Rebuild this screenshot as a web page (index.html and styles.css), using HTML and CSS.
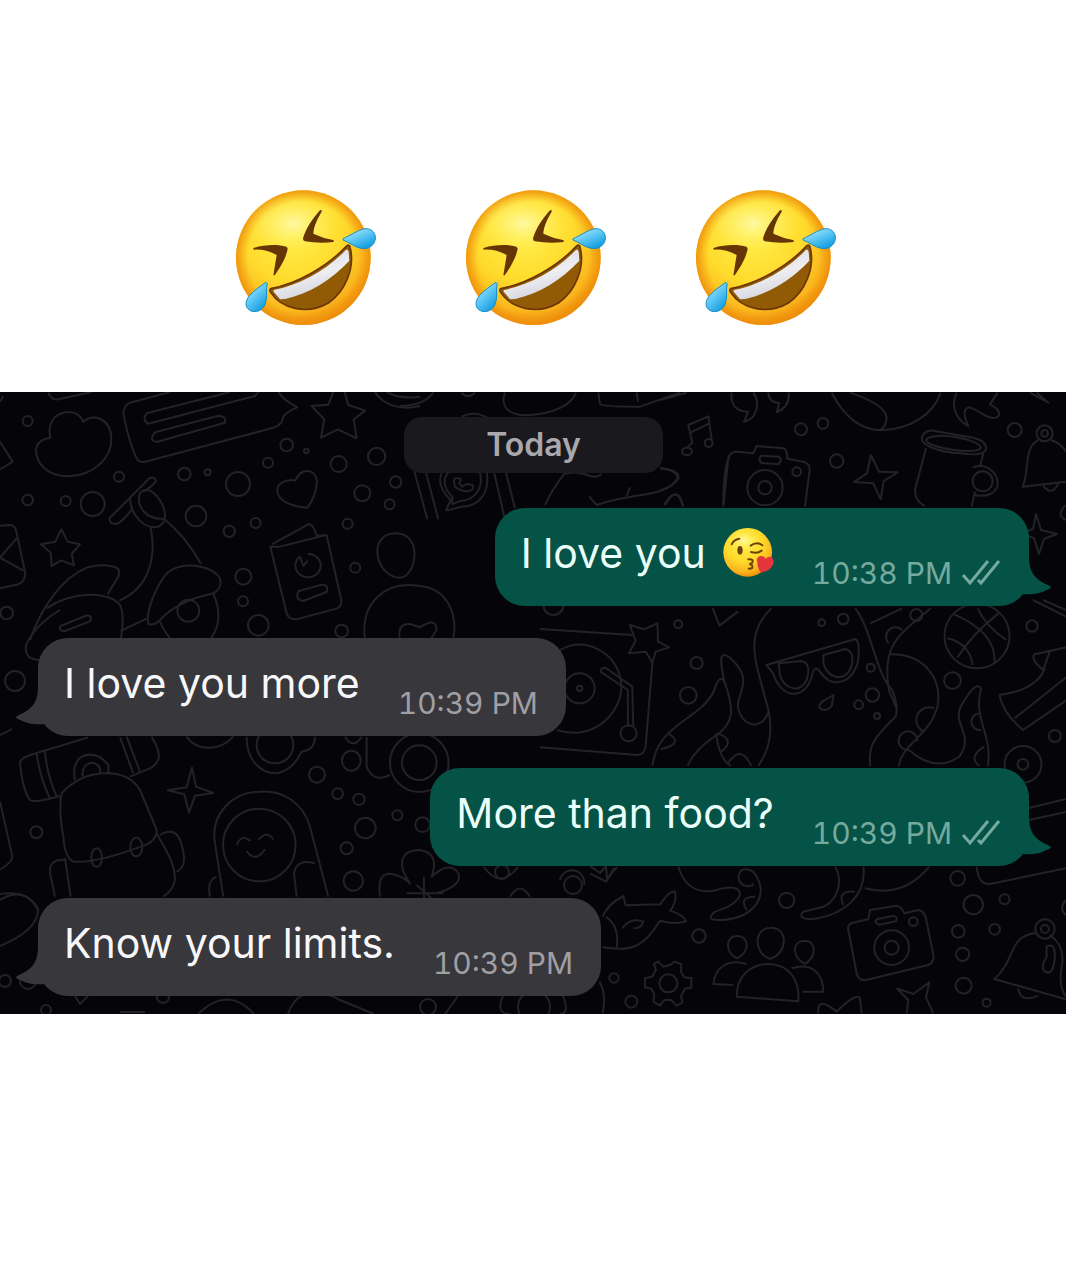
FILE: index.html
```html
<!DOCTYPE html>
<html lang="en">
<head>
<meta charset="utf-8">
<meta name="viewport" content="width=device-width, initial-scale=1">
<title>Know your limits</title>
<link rel="stylesheet" href="styles.css">
</head>
<body>
<svg class="defs" aria-hidden="true">
  <defs>
    <radialGradient id="face" cx="0.42" cy="0.3" r="0.75">
      <stop offset="0" stop-color="#fff04f"/><stop offset="0.5" stop-color="#ffdb2c"/><stop offset="0.8" stop-color="#fab51e"/><stop offset="1" stop-color="#ea8205"/>
    </radialGradient>
    <radialGradient id="rim" cx="0.5" cy="0.5" r="0.5">
      <stop offset="0.82" stop-color="#f0920a" stop-opacity="0"/><stop offset="1" stop-color="#ee8d0a" stop-opacity="0.85"/>
    </radialGradient>
    <radialGradient id="shine">
      <stop offset="0" stop-color="#fffbb8" stop-opacity="0.8"/><stop offset="1" stop-color="#fff050" stop-opacity="0"/>
    </radialGradient>
    <linearGradient id="tear" x1="0" y1="0" x2="0.7" y2="1">
      <stop offset="0" stop-color="#c5f2ff"/><stop offset="0.5" stop-color="#62c9f5"/><stop offset="1" stop-color="#109be0"/>
    </linearGradient>
    <linearGradient id="teeth" x1="0" y1="0" x2="0.4" y2="1">
      <stop offset="0" stop-color="#cfd2d8"/><stop offset="0.6" stop-color="#eeeef2"/><stop offset="1" stop-color="#d3d4dc"/>
    </linearGradient>
    <symbol id="rofl" viewBox="3 0 462 465">
      <circle cx="235" cy="233" r="202" fill="url(#face)"/>
      <circle cx="235" cy="233" r="202" fill="url(#rim)"/>
      <ellipse cx="205" cy="130" rx="145" ry="90" fill="url(#shine)"/>
      <path d="M86 204C120 193 160 193 184 200Q190 204 187 211C182 235 165 264 149 286Q144 288 146 280L155 225Q120 207 88 209Q83 207 86 204Z" fill="#653506"/>
      <path d="M290 91Q286 88 281 95C264 115 242 145 234 175Q233 182 240 184C268 189 300 189 325 186Q330 183 324 180Q295 175 265 161C266 137 280 112 290 95Z" fill="#653506"/>
      <path d="M137 326C215 311 305 262 366 197Q374 192 376 205C390 265 360 335 310 369C245 407 168 385 137 337Q132 329 137 326Z" fill="#905b04" stroke="#6b3506" stroke-width="5"/>
      <path d="M146 330C222 316 306 270 363 209Q369 206 371 216L373 242C318 301 253 340 181 357L165 358Q155 345 146 335Z" fill="url(#teeth)"/>
      <path d="M354 176C374 168 398 150 420 146C441 145 453 160 451 177C448 197 430 209 408 205C388 201 372 186 354 180Z" fill="url(#tear)" stroke="#168ec4" stroke-width="3"/>
      <path d="M123 307C109 316 87 332 74 346C61 362 58 380 74 391C91 401 114 391 121 371C129 350 121 327 127 311Z" fill="url(#tear)" stroke="#168ec4" stroke-width="3"/>
    </symbol>
    <symbol id="ticks" viewBox="0 0 40 30">
      <path d="M2 17L9 25L27 3M17 22L20 25L38 3" fill="none" stroke="currentColor" stroke-width="3"/>
    </symbol>
    <symbol id="tail" viewBox="0 0 50 62">
      <path d="M0 0H28V22C28 40 35 46 49 52Q51 54 48 55C38 60 30 61 21 60L0 62Z" fill="currentColor"/>
    </symbol>
  </defs>
</svg>

<header class="reactions">
  <svg class="rofl" role="img" aria-label="Rolling on the floor laughing"><use href="#rofl"/></svg>
  <svg class="rofl" role="img" aria-label="Rolling on the floor laughing"><use href="#rofl"/></svg>
  <svg class="rofl" role="img" aria-label="Rolling on the floor laughing"><use href="#rofl"/></svg>
</header>

<main class="chat">
  <svg class="wallpaper" viewBox="0 392 1066 622" preserveAspectRatio="xMidYMid slice" aria-hidden="true">
    <!-- cloud, note, star, lamp, passport -->
    <g transform="translate(0 390) scale(.3333)">
      <path d="M151 143C139 88 175 65 211 66Q240 70 250 95C284 68 333 88 334 145C337 202 280 257 205 259C143 259 108 220 108 181Q110 149 151 143Z"/>
      <path d="M145 8Q155 33 175 28L275 6M370 70Q370 47 390 38L510 6M370 70C380 120 395 175 410 205Q417 218 433 216L825 112Q848 102 850 80Q860 65 892 52Q850 30 835 6M440 70L690 6M440 70Q425 90 445 101L765 18L775 6M465 127L655 77Q680 78 675 98L470 156Q445 152 465 127Z"/>
      <path d="M1000 6L985 44L935 48L973 88L963 143L1014 118L1070 145L1061 88L1096 62L1045 45L1034 6M1125 6C1150 45 1200 62 1260 48M1160 6Q1200 28 1260 20M0 155L38 215L0 238M0 35L10 18"/>
      <path d="M184 418L203 455L240 463L215 492L222 526L184 511L155 528L152 488L123 463L166 455ZM886 272C905 230 948 235 951 275Q948 320 922 353C870 349 830 330 832 300C832 278 865 265 886 272Z"/>
      <path d="M0 407L32 405Q47 408 50 430L75 545Q77 575 55 583L0 595M50 445L0 503L70 542"/>
      <path d="M328 385L448 265Q464 260 468 272Q464 285 430 305M328 385Q328 403 350 402Q368 395 398 355M390 325C393 378 435 420 475 410C505 397 500 355 470 318C450 295 426 295 418 315C410 350 440 390 492 386M492 386C545 430 578 475 603 522M452 414C468 490 455 590 358 632"/>
      <path d="M90 750C125 650 185 565 260 533Q300 520 340 530Q365 535 355 560L323 613M140 655C220 600 330 605 360 645Q375 675 362 750M362 723L440 686M445 702C435 670 470 580 505 546C555 510 640 530 660 565Q668 595 640 610C570 625 510 655 475 695Q460 707 445 702ZM480 695Q495 730 515 750M640 610Q675 690 630 750M182 708L258 677Q280 675 270 694L195 723Q172 723 182 708Z"/>
      <circle cx="565" cy="662" r="33"/>
      <path d="M815 463L925 403Q940 400 950 437L980 436L1024 630Q1026 650 1010 656L890 688Q868 690 860 670L811 470L840 470L975 436M900 500A38 35 0 1 0 923 492M900 500L910 528L923 512M895 604L965 584Q987 583 980 606L910 633Q884 628 895 604Z"/>
      <path d="M1188 430C1100 430 1125 560 1200 563C1250 562 1270 430 1188 430ZM1095 750C1080 640 1155 570 1260 588C1340 595 1375 670 1360 750M1200 750Q1190 700 1230 702L1260 712Q1310 680 1310 720L1290 750"/>
      <circle cx="83" cy="93" r="15"/><circle cx="83" cy="330" r="16"/><circle cx="197" cy="333" r="15"/><circle cx="278" cy="342" r="36"/><circle cx="357" cy="260" r="15"/><circle cx="553" cy="252" r="19"/><circle cx="623" cy="247" r="9"/><circle cx="714" cy="282" r="36"/><circle cx="588" cy="378" r="31"/><circle cx="688" cy="424" r="17"/><circle cx="767" cy="399" r="15"/><circle cx="804" cy="218" r="15"/><circle cx="860" cy="165" r="19"/><circle cx="919" cy="183" r="7"/><circle cx="1016" cy="222" r="24"/><circle cx="1130" cy="199" r="26"/><circle cx="1187" cy="276" r="17"/><circle cx="1087" cy="310" r="24"/><circle cx="1169" cy="343" r="15"/><circle cx="1043" cy="401" r="15"/><circle cx="1066" cy="533" r="15"/><circle cx="730" cy="560" r="24"/><circle cx="729" cy="634" r="15"/><circle cx="775" cy="706" r="31"/><circle cx="1025" cy="723" r="19"/><circle cx="20" cy="669" r="19"/>
    </g>
    <!-- phone screen and shapes behind the date -->
    <g transform="translate(400 390) scale(.3333)">
      <path d="M0 48Q70 48 100 8M315 8C300 50 325 75 380 76C460 72 515 45 528 8M185 8Q203 30 225 8M595 8L600 42Q605 50 720 50L840 8M710 8L714 35M185 80Q225 60 265 85M42 240L82 388M78 248L115 388M283 250L315 388M318 248L345 355M138 362L152 330C110 290 115 255 138 230M138 362L185 350C240 350 270 305 260 245M155 343L158 322C125 290 130 260 148 245M155 343L180 333C230 330 250 290 240 248"/>
      <path d="M163 268Q155 300 203 304Q222 302 218 285L200 282L187 290L178 280L183 268Q170 260 163 268ZM435 345Q455 300 493 252Q530 240 570 258Q590 265 605 252M780 235Q840 240 835 265Q815 300 740 313Q650 325 590 345L568 320M680 318L690 292M795 345Q835 280 850 350M970 345Q970 230 990 195"/>
    </g>
    <!-- music, camera, mug, bell -->
    <g transform="translate(660 390) scale(.3333)">
      <path d="M83 170L97 158L85 105L145 79L155 148M92 127L147 101M215 8C210 45 230 65 265 65L252 95C285 90 305 45 280 8M325 8Q325 35 358 40L350 67Q390 50 386 8M0 30L80 8M0 235Q50 240 53 265Q40 290 0 302M12 345Q50 280 67 345"/>
      <ellipse cx="81" cy="184" rx="15" ry="11"/><ellipse cx="146" cy="159" rx="12" ry="12"/>
      <path d="M190 350L205 205Q210 185 230 185L280 190L290 168L370 175Q382 178 382 206L430 215Q450 220 449 240L435 350M305 197L355 200Q370 210 355 223L305 219Q292 207 305 197ZM515 8C550 75 600 120 665 121C750 117 820 75 842 8M570 8C620 25 680 50 680 85Q678 110 660 121M890 8C870 50 890 90 925 108Q900 55 930 52C965 65 990 95 1015 80Q1025 60 990 43L1013 8M1110 8L1165 38L1130 8"/>
      <circle cx="315" cy="293" r="53"/><circle cx="315" cy="293" r="20"/><circle cx="410" cy="245" r="13"/><circle cx="423" cy="118" r="18"/><circle cx="489" cy="100" r="16"/><circle cx="530" cy="213" r="20"/><circle cx="1064" cy="120" r="21"/><circle cx="1154" cy="130" r="24"/><circle cx="1154" cy="130" r="10"/>
      <path d="M633 195L657 245L713 247L671 273L662 328L640 280L582 276L621 250ZM785 145Q790 120 820 122L940 143Q980 152 978 178Q972 200 900 190C830 185 785 165 785 145ZM798 150C815 120 970 150 962 175C950 195 805 175 798 150ZM798 175L765 300Q765 335 795 348M970 190L960 230M945 305L935 350"/>
      <circle cx="968" cy="274" r="30"/><path d="M938 232C985 215 1025 260 1010 295Q990 325 945 315M1136 150C1090 170 1110 240 1088 290L1218 275M1172 150Q1205 160 1218 185M1150 288Q1175 320 1195 282"/>
    </g>
    <path d="M1036 514L1041 530L1057 534L1044 539L1039 554L1034 538L1020 534L1033 529ZM1066 505Q1055 515 1066 520"/>
    <!-- turntable, glasses, ball -->
    <g transform="translate(540 600) scale(.3354 .3333)">
      <path d="M0 87L275 105M335 190L315 440Q310 465 290 465L0 442M268 75L310 88L350 70L352 125L385 142L345 155L335 188L315 155L265 160L285 123ZM515 25L535 77L590 35M60 150C130 110 220 150 240 235C260 320 170 430 50 390"/>
      <circle cx="118" cy="265" r="45"/><circle cx="118" cy="265" r="8"/><circle cx="264" cy="400" r="24"/>
      <path d="M180 215Q185 195 205 210L275 260L278 380M180 215L262 270L262 380M335 498C350 370 480 360 520 270Q535 220 550 245C580 330 580 370 520 410Q460 450 440 498M550 245C535 180 535 150 565 172C640 240 590 270 590 320C600 380 660 395 682 335M690 25C600 110 650 200 682 335Q700 430 650 498M525 400Q535 480 570 498"/>
      <path d="M675 195L940 117Q955 125 948 185C930 250 870 270 835 215Q818 190 810 230C790 300 720 300 695 220ZM712 190L780 183Q810 190 795 240C775 280 730 270 715 225ZM845 165L910 147Q940 155 928 200C910 250 855 235 845 190ZM875 285L850 300C810 320 850 345 870 318Z"/>
      <path d="M940 25C990 90 1000 220 1050 270Q1070 320 1060 350C1010 400 975 430 985 498M985 70L1080 25M1165 25C1060 110 1020 140 1040 270L1065 330M1040 163C1150 160 1200 240 1185 320C1160 410 1080 430 1070 498M1100 450Q1180 520 1250 470C1300 400 1220 370 1260 310Q1300 240 1315 265C1290 360 1350 400 1335 498M1040 130A25 25 0 1 1 1080 90M1175 325A34 34 0 1 0 1145 395M1100 450A28 28 0 1 1 1125 425M1308 340A22 22 0 0 0 1315 390M1325 440Q1275 470 1310 498M530 400Q585 420 540 455M385 402Q430 430 360 448M560 490Q600 430 630 498"/>
      <circle cx="1303" cy="108" r="97"/><path d="M1235 43C1320 80 1360 130 1355 190M1370 38Q1290 100 1245 172M1305 25Q1330 80 1390 120M1215 115Q1280 130 1290 195M1470 0L1578 55M1500 0L1578 35M1578 140L1475 163Q1460 175 1500 210L1520 155M1505 205Q1480 270 1370 285Q1380 340 1440 390L1578 295M1415 355L1578 225"/>
      <circle cx="1122" cy="45" r="18"/><circle cx="412" cy="73" r="12"/><circle cx="467" cy="189" r="18"/><circle cx="442" cy="286" r="25"/><circle cx="840" cy="68" r="10"/><circle cx="904" cy="57" r="16"/><circle cx="986" cy="203" r="12"/><circle cx="991" cy="285" r="20"/><circle cx="950" cy="314" r="13"/><circle cx="1005" cy="348" r="9"/><circle cx="1467" cy="78" r="17"/><circle cx="1230" cy="242" r="25"/><circle cx="1535" cy="408" r="18"/><circle cx="1440" cy="493" r="55"/><circle cx="1440" cy="493" r="16"/><circle cx="40" cy="15" r="30"/>
    </g>
    <!-- bag, sparkle, hooded figure, flower -->
    <g transform="translate(0 730) scale(.3333)">
      <path d="M60 100Q60 85 90 75L265 22M60 100C65 150 75 190 90 210Q105 220 180 198M110 70Q120 145 150 205M135 65Q140 130 170 200M360 22L400 130M380 20L420 125M455 20C485 70 485 95 450 115L390 140M225 150Q215 100 245 80Q290 60 325 105L325 130M248 140Q245 100 278 98Q305 105 300 130M185 190Q240 130 320 130Q390 130 420 180L470 300Q470 330 440 343C370 370 280 400 220 395Q195 385 190 320Q175 240 185 190ZM470 310C500 365 525 400 525 450Q520 480 490 500M195 385L212 500M480 315Q530 285 545 345Q565 410 530 425M200 390Q145 385 150 430L165 500"/>
      <ellipse cx="290" cy="383" rx="16" ry="28"/><ellipse cx="409" cy="351" rx="18" ry="28"/><circle cx="778" cy="345" r="109"/>
      <path d="M576 113L588 170L640 189L585 197L567 248L553 193L503 181L560 172ZM670 500L645 340C630 250 700 185 780 185C850 180 910 220 930 290L985 500M710 345Q725 310 752 333M775 330Q800 300 820 328M740 363Q765 400 795 358M630 500Q620 450 650 440M890 500L882 430Q890 385 945 400M560 20C590 65 660 65 700 20M740 20C740 90 780 130 830 130Q880 120 905 65Q945 60 945 20M1100 20L1100 110Q1120 160 1170 135M1035 20Q1060 60 1085 20M0 215L35 370Q45 395 0 418M0 492Q90 480 115 540"/>
      <circle cx="825" cy="45" r="55"/><circle cx="1258" cy="98" r="52"/><circle cx="1258" cy="98" r="88"/><ellipse cx="1054" cy="92" rx="28" ry="30"/>
      <path d="M1140 500Q1130 420 1180 433Q1210 440 1230 460C1190 405 1200 360 1260 360Q1320 370 1295 440Q1350 390 1375 430Q1390 465 1310 490M1220 490H1330M1250 465L1300 510M1272 440V520"/>
      <circle cx="109" cy="307" r="18"/><circle cx="951" cy="134" r="24"/><circle cx="1013" cy="191" r="16"/><circle cx="1077" cy="208" r="17"/><circle cx="1192" cy="256" r="15"/><circle cx="1096" cy="294" r="31"/><circle cx="1268" cy="284" r="22"/><circle cx="1040" cy="355" r="18"/><circle cx="1060" cy="453" r="29"/>
    </g>
    <path d="M484 867Q500 890 518 867M590 866L600 873L606 866L607 879L617 867M560 880A12 12 0 1 1 584 885M510 897Q520 880 530 897M1029 808L1066 799M1020 822L1066 812"/>
    <circle cx="573" cy="885" r="9"/><circle cx="502" cy="872" r="7"/>
    <!-- fish, gear, people, camera, bell -->
    <g transform="translate(590 860) scale(.3333)">
      <path d="M38 170Q50 135 100 108L107 136L210 133Q240 90 255 95Q262 125 240 152Q280 165 288 183Q260 195 210 182C160 265 120 275 38 262M48 170Q90 200 80 262M97 205Q120 170 160 185Q155 205 130 205M0 40L48 65L72 25M265 20C280 70 315 105 380 90Q450 70 450 105Q440 135 375 155Q345 180 385 180C490 180 530 110 505 60Q490 20 455 30A22 22 0 1 0 492 72M735 20C760 60 745 120 700 140L640 155Q620 175 665 178C760 165 830 110 820 20M825 85Q940 115 1018 20M1160 20Q1165 75 1200 72L1428 25M495 110Q445 110 470 150M795 95Q740 90 760 135"/>
      <path d="M205 305L220 320L240 315L252 305L274 312L273 335L283 352L304 355V383L285 386L273 408L278 428L260 437L243 420H222L210 437L190 425L193 402L184 386L165 382V355L186 350L198 330L192 312Z"/><circle cx="235" cy="370" r="27"/>
      <path d="M442 228C405 228 405 275 440 295C480 280 480 228 442 228ZM543 203C490 203 490 280 540 297C595 280 595 203 543 203ZM643 242C605 245 605 290 645 312C680 290 680 242 643 242ZM440 410C440 350 480 312 535 312C600 312 630 365 625 424ZM430 375L370 372C375 325 410 295 470 312M605 325C670 305 700 345 700 395H638"/>
      <path d="M775 210Q770 190 795 187L835 178L840 150L920 137Q935 140 943 160L985 150Q1002 152 1008 175L1031 290Q1030 310 1015 315L825 361Q805 362 800 340ZM860 178L910 167Q925 172 918 184L868 194Q852 190 860 178ZM685 460Q680 405 740 455Q800 395 810 415L815 460M920 385L970 402L1018 367L1008 412L1030 460M920 385L955 420L950 460M1340 218C1250 230 1280 300 1213 357L1428 418M1380 225Q1428 260 1415 320Q1405 380 1428 410M1285 385Q1290 430 1345 407M1370 260Q1395 245 1395 290Q1390 350 1365 335Q1350 325 1370 290ZM28 365Q50 400 38 460"/>
      <circle cx="905" cy="263" r="52"/><circle cx="905" cy="263" r="21"/><circle cx="970" cy="185" r="13"/><circle cx="1365" cy="207" r="29"/><circle cx="1365" cy="207" r="12"/><circle cx="590" cy="121" r="23"/><circle cx="327" cy="228" r="20"/><circle cx="72" cy="354" r="14"/><circle cx="124" cy="425" r="18"/><circle cx="1103" cy="55" r="22"/><circle cx="1150" cy="134" r="29"/><circle cx="1244" cy="118" r="15"/><circle cx="1105" cy="214" r="19"/><circle cx="1214" cy="208" r="16"/><circle cx="1118" cy="283" r="20"/><circle cx="1121" cy="377" r="24"/><circle cx="1190" cy="428" r="12"/><path d="M1428 120Q1405 145 1428 165"/>
    </g>
    <!-- fragments around the lower bubbles -->
    <path d="M26 645Q35 625 60 610M26 645Q24 660 40 660M0 735Q5 733 12 729M0 900Q25 885 38 910Q38 930 0 946M198 1014Q228 985 254 1014M288 1014Q300 980 340 1000L374 1014M75 996L80 1004L88 996M445 1014L458 996M120 1012H145M503 996Q495 1014 510 1014M563 996Q570 1014 560 1014"/>
    <circle cx="15" cy="681" r="10"/><circle cx="5" cy="981" r="6"/><circle cx="28" cy="981" r="8"/><circle cx="46" cy="1010" r="5"/><circle cx="163" cy="997" r="6"/><circle cx="428" cy="1007" r="8"/><circle cx="534" cy="1007" r="16"/>
  </svg>

  <p class="day">Today</p>
  <ol class="messages">
    <li class="bubble sent">
      <span class="text">I love you
        <svg class="kiss" viewBox="0 0 156 156" role="img" aria-label="Face blowing a kiss">
          <circle cx="77" cy="76" r="73" fill="url(#face)"/><ellipse cx="65" cy="40" rx="48" ry="30" fill="url(#shine)"/>
          <path d="M29 52Q34 38 52 35M86 56Q105 42 121 55M87 75Q106 81 119 71M79 97Q99 96 89 109Q79 110 89 114Q98 125 80 125" fill="none" stroke="#70420b" stroke-width="6" stroke-linecap="round"/>
          <ellipse cx="54" cy="70" rx="8" ry="13" fill="#70420b"/>
          <path d="M106 105C98 87 124 79 131 96C144 79 161 96 153 113Q145 132 116 136Q106 122 106 105Z" fill="#e5353c"/>
        </svg></span>
      <span class="meta"><time>10:38 PM</time><svg class="ticks" role="img" aria-label="Delivered"><use href="#ticks"/></svg></span>
      <svg class="tail" aria-hidden="true"><use href="#tail"/></svg>
    </li>
    <li class="bubble received">
      <span class="text">I love you more</span>
      <span class="meta"><time>10:39 PM</time></span>
      <svg class="tail" aria-hidden="true"><use href="#tail"/></svg>
    </li>
    <li class="bubble sent">
      <span class="text">More than food?</span>
      <span class="meta"><time>10:39 PM</time><svg class="ticks" role="img" aria-label="Delivered"><use href="#ticks"/></svg></span>
      <svg class="tail" aria-hidden="true"><use href="#tail"/></svg>
    </li>
    <li class="bubble received">
      <span class="text">Know your limits.</span>
      <span class="meta"><time>10:39 PM</time></span>
      <svg class="tail" aria-hidden="true"><use href="#tail"/></svg>
    </li>
  </ol>
</main>
</body>
</html>
```
FILE: styles.css
```css
* {
  box-sizing: border-box;
}

body {
  margin: 0;
  background: #fff;
  font-family: Inter, "Liberation Sans", sans-serif;
}

.defs {
  position: absolute;
  width: 0;
  height: 0;
}

.reactions {
  display: flex;
  justify-content: center;
  gap: 76px;
  padding: 180px 0 57px;
}

.rofl {
  width: 154px;
  height: 155px;
}

.chat {
  position: relative;
  isolation: isolate;
  display: flex;
  flex-direction: column;
  align-items: center;
  gap: 35px;
  padding: 25px 37px 18px 38px;
  overflow: hidden;
  background: #050509;
}

.wallpaper {
  position: absolute;
  inset: 0;
  z-index: -1;
  width: 100%;
  height: 100%;
  fill: none;
  stroke: #232226;
  stroke-width: 2;
  stroke-linejoin: round;
}

.wallpaper * {
  vector-effect: non-scaling-stroke;
}

.day {
  margin: 0;
  padding: 0 82px;
  border-radius: 18px;
  background: #1a191e;
  color: #a9a8ad;
  font-size: 32px;
  font-weight: 600;
  line-height: 56px;
}

.messages {
  display: flex;
  flex-direction: column;
  gap: 32px;
  width: 100%;
  margin: 0;
  padding: 0;
  list-style: none;
}

.bubble {
  position: relative;
  display: flex;
  gap: 38px;
  height: 98px;
  padding: 0 28px 0 26px;
  border-radius: 30px;
}

.sent {
  align-self: flex-end;
  background: #055246;
  color: #eafff9;
}

.received {
  align-self: flex-start;
  background: #38373c;
  color: #f7f7fa;
}

.text {
  display: flex;
  align-items: center;
  gap: 16px;
  height: 90px;
  font-size: 41px;
  white-space: nowrap;
}

.kiss {
  width: 52px;
  height: 52px;
}

.meta {
  display: flex;
  align-items: center;
  align-self: flex-end;
  gap: 9px;
  height: 66px;
  color: #a09fa4;
  font-size: 30px;
  font-variant-numeric: tabular-nums;
  white-space: nowrap;
}

.sent .meta {
  color: #75aa9e;
}

.ticks {
  width: 40px;
  height: 30px;
}

.tail {
  position: absolute;
  right: -22px;
  bottom: 10px;
  z-index: -1;
  width: 50px;
  height: 62px;
  color: #055246;
}

.received .tail {
  right: auto;
  left: -22px;
  color: #38373c;
  transform: scaleX(-1);
}
```
